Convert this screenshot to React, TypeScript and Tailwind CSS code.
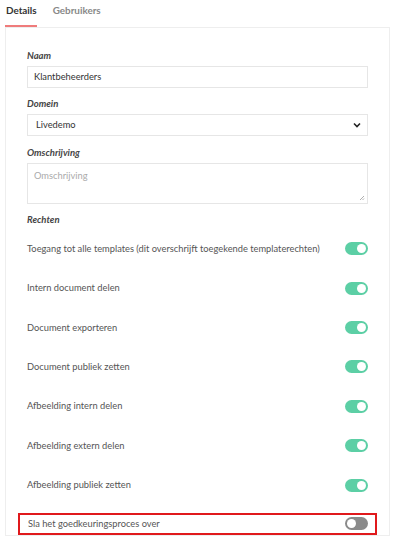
import * as React from "react";

const RIGHTS: { label: string; on: boolean }[] = [
  { label: "Toegang tot alle templates (dit overschrijft toegekende templaterechten)", on: true },
  { label: "Intern document delen", on: true },
  { label: "Document exporteren", on: true },
  { label: "Document publiek zetten", on: true },
  { label: "Afbeelding intern delen", on: true },
  { label: "Afbeelding extern delen", on: true },
  { label: "Afbeelding publiek zetten", on: true },
];

function Toggle({ on }: { on: boolean }) {
  return (
    <span
      className={
        on
          ? "relative inline-block h-[13px] w-[23px] shrink-0 rounded-full bg-[#5ccfa5]"
          : "relative inline-block h-[13px] w-[23px] shrink-0 rounded-full bg-[#8a8a8a]"
      }
    >
      <span
        className={
          on
            ? "absolute right-[2px] top-[2px] h-[9px] w-[9px] rounded-full bg-white"
            : "absolute left-[2px] top-[2px] h-[9px] w-[9px] rounded-full bg-white"
        }
      />
    </span>
  );
}

export default function App() {
  return (
    <div className="h-[537px] w-[400px] overflow-hidden bg-white font-['Lato',sans-serif] text-[#555]">
      {/* tabs */}
      <div className="flex gap-[16px] pl-[5px] pt-[3px] text-[9.9px] font-bold leading-[14px]">
        <div className="border-b-2 border-[#ef7b7b] pb-[8px] pl-[1px] text-[#333]">Details</div>
        <div className="pb-[8px] text-[#888]">Gebruikers</div>
      </div>

      <div className="ml-[5px] mr-[10px] border border-[#eeeeee] px-[21px] pt-[21px]">
        <label className="block text-[9.5px] font-bold italic leading-[14px] text-[#444]">Naam</label>
        <div className="mt-[3px] flex h-[22px] items-center border border-[#e6e6e6] px-[6px] text-[9.3px] text-[#333]">
          Klantbeheerders
        </div>

        <label className="mt-[9px] block text-[9.5px] font-bold italic leading-[14px] text-[#444]">Domein</label>
        <div className="mt-[3px] flex h-[22px] items-center justify-between border border-[#e6e6e6] pl-[8px] pr-[6px] text-[9.3px] text-[#333]">
          <span>Livedemo</span>
          <svg width="8" height="6" viewBox="0 0 8 6">
            <path d="M1 1.5 L4 4.5 L7 1.5" fill="none" stroke="#222" strokeWidth="1.6" />
          </svg>
        </div>

        <label className="mt-[10px] block text-[9.5px] font-bold italic leading-[14px] text-[#444]">Omschrijving</label>
        <div className="relative mt-[3px] h-[41px] border border-[#e6e6e6] px-[6px] pt-[5px] text-[9.3px] text-[#aaa]">
          Omschrijving
          <svg className="absolute bottom-[2px] right-[2px]" width="6" height="6" viewBox="0 0 6 6">
            <path d="M1 5 L5 1 M3.5 5 L5 3.5" stroke="#999" strokeWidth="0.8" />
          </svg>
        </div>

        <div className="mt-[9px] text-[9.5px] font-bold italic leading-[14px] text-[#444]">Rechten</div>

        <div className="mt-[2px] flex flex-col">
          {RIGHTS.map((r) => (
            <div key={r.label} className="flex h-[39.4px] items-center justify-between text-[9.3px]">
              <span className="whitespace-nowrap">{r.label}</span>
              <Toggle on={r.on} />
            </div>
          ))}
          <div className="-mx-[9px] mt-[8px] flex h-[22px] items-center justify-between border-2 border-[#e0191c] pl-[8px] pr-[7px] text-[9.3px]">
            <span>Sla het goedkeuringsproces over</span>
            <Toggle on={false} />
          </div>
        </div>
      </div>
    </div>
  );
}
